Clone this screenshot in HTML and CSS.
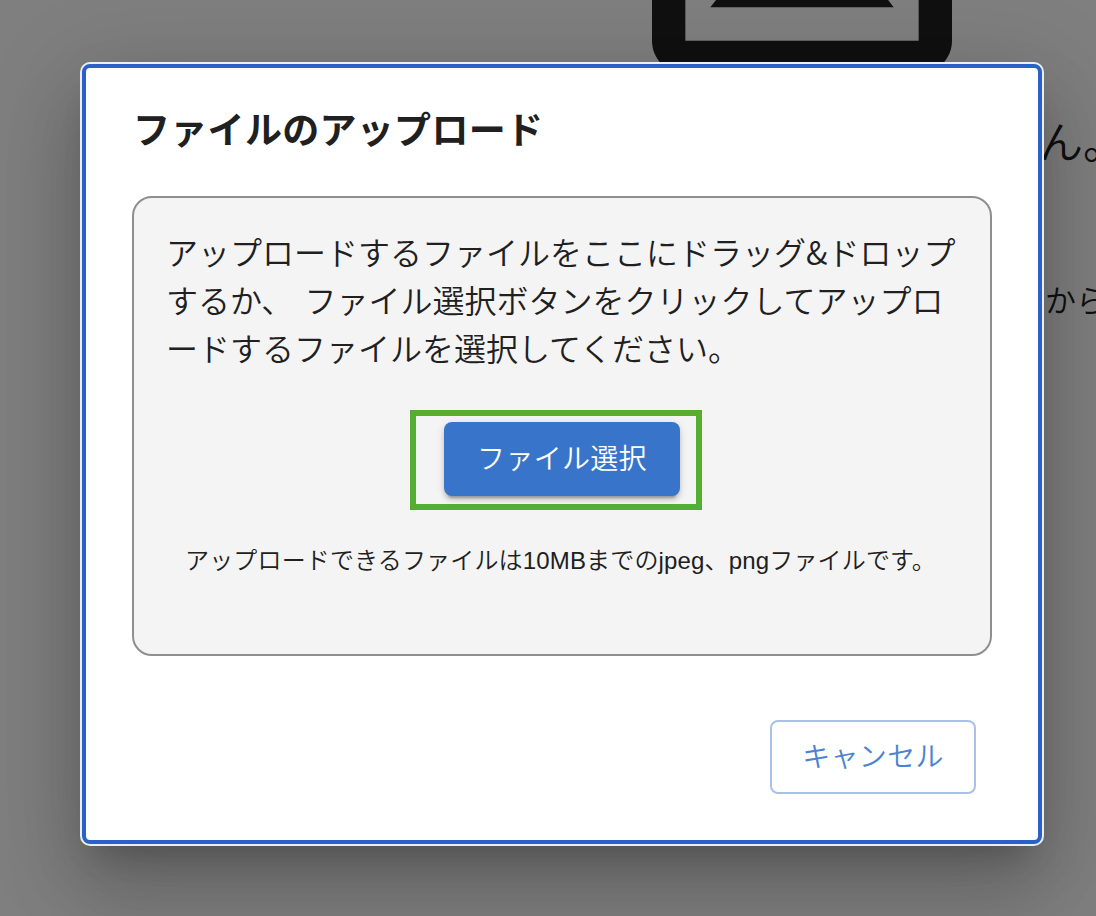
FILE: index.html
```html
<!DOCTYPE html>
<html lang="ja">
<head>
<meta charset="utf-8">
<title>ファイルのアップロード</title>
<link rel="stylesheet" href="styles.css">
</head>
<body>
<main class="page">
  <svg class="page-icon" viewBox="0 0 24 24" aria-hidden="true"><path d="M19 5v14H5V5h14m0-2H5c-1.1 0-2 .9-2 2v14c0 1.1.9 2 2 2h14c1.1 0 2-.9 2-2V5c0-1.1-.9-2-2-2z"/><path d="M13.96 12.29l-2.75 3.54-1.96-2.36L6.5 17h11l-3.54-4.71z"/></svg>
  <p class="page-heading">ん。</p>
  <p class="page-text">から</p>
</main>
<div class="backdrop">
  <section class="dialog" role="dialog" aria-labelledby="dialog-title">
    <h2 class="dialog-title" id="dialog-title">ファイルのアップロード</h2>
    <div class="dropzone">
      <p class="instructions">アップロードするファイルをここにドラッグ&amp;ドロップ<br>するか、 ファイル選択ボタンをクリックしてアップロ<br>ードするファイルを選択してください。</p>
      <div class="highlight"><button class="button button-primary">ファイル選択</button></div>
      <p class="hint">アップロードできるファイルは10MBまでのjpeg、pngファイルです。</p>
    </div>
    <div class="actions"><button class="button button-outlined">キャンセル</button></div>
  </section>
</div>
</body>
</html>
```
FILE: styles.css
```css
* { box-sizing: border-box; }
body {
  margin: 0;
  height: 916px;
  overflow: hidden;
  background: #fff;
  color: #202020;
  font-family: "Noto Sans CJK JP", sans-serif;
}
p, h2 { margin: 0; }
.page {
  height: 916px;
  overflow: hidden;
  display: flex;
  flex-direction: column;
}
.page-icon {
  flex: none;
  width: 400px;
  height: 400px;
  margin: -276px 0 0 602px;
  fill: #202020;
}
.page-heading {
  margin-left: 1039px;
  margin-top: -20px;
  font-size: 44px;
  line-height: 72px;
  font-weight: 350;
  white-space: nowrap;
}
.page-text {
  margin-left: 1045px;
  margin-top: 99px;
  font-size: 31px;
  line-height: 48px;
  font-weight: 350;
  white-space: nowrap;
}
.backdrop {
  position: absolute;
  inset: 0;
  padding: 64px 0 0 82px;
  overflow: hidden;
  background: rgba(0, 0, 0, .5);
}
.dialog {
  width: 960px;
  height: 780px;
  padding: 37px 46px 0;
  border: 4px solid #2b60c8;
  border-radius: 8px;
  background: #fff;
  box-shadow: 0 0 0 2px #e9eef8,
    0 22px 30px -14px rgba(0, 0, 0, .2),
    0 48px 76px 6px rgba(0, 0, 0, .14),
    0 18px 92px 16px rgba(0, 0, 0, .12);
}
.dialog-title {
  height: 91px;
  padding-left: 1px;
  font-size: 37px;
  line-height: 46px;
  font-weight: 700;
  letter-spacing: .3px;
  white-space: nowrap;
}
.dropzone {
  width: 860px;
  height: 460px;
  display: flex;
  flex-direction: column;
  align-items: center;
  border: 2px solid #8f8f8f;
  border-radius: 20px;
  background: #f4f4f4;
  padding-top: 29px;
}
.instructions {
  width: 792px;
  font-size: 32px;
  line-height: 48px;
  font-weight: 350;
  word-spacing: 4px;
  white-space: nowrap;
}
.highlight {
  width: 292px;
  height: 100px;
  margin-top: 39px;
  margin-right: 12px;
  padding: 6px 0 0 28px;
  border: 6px solid #55ad32;
}
.button {
  display: flex;
  align-items: center;
  justify-content: center;
  height: 74px;
  padding: 0 0 5px;
  border: 0;
  border-radius: 8px;
  font-family: inherit;
  font-size: 28px;
  font-weight: 350;
  line-height: 48px;
  letter-spacing: .3px;
  white-space: nowrap;
}
.button-primary {
  width: 236px;
  background: #3974cb;
  color: #fff;
  box-shadow: 0 6px 2px -4px rgba(0, 0, 0, .2),
    0 4px 4px rgba(0, 0, 0, .14),
    0 2px 10px rgba(0, 0, 0, .12);
}
.hint {
  margin-top: 31px;
  padding-right: 3px;
  font-family: "Liberation Sans", "Noto Sans CJK JP", sans-serif;
  font-size: 24px;
  font-weight: 350;
  line-height: 40px;
  letter-spacing: .16px;
  white-space: nowrap;
}
.actions {
  display: flex;
  justify-content: flex-end;
  padding: 64px 16px 0 0;
}
.button-outlined {
  width: 206px;
  border: 2px solid #a8c1e9;
  background: #fff;
  color: #4b82d3;
}
```
